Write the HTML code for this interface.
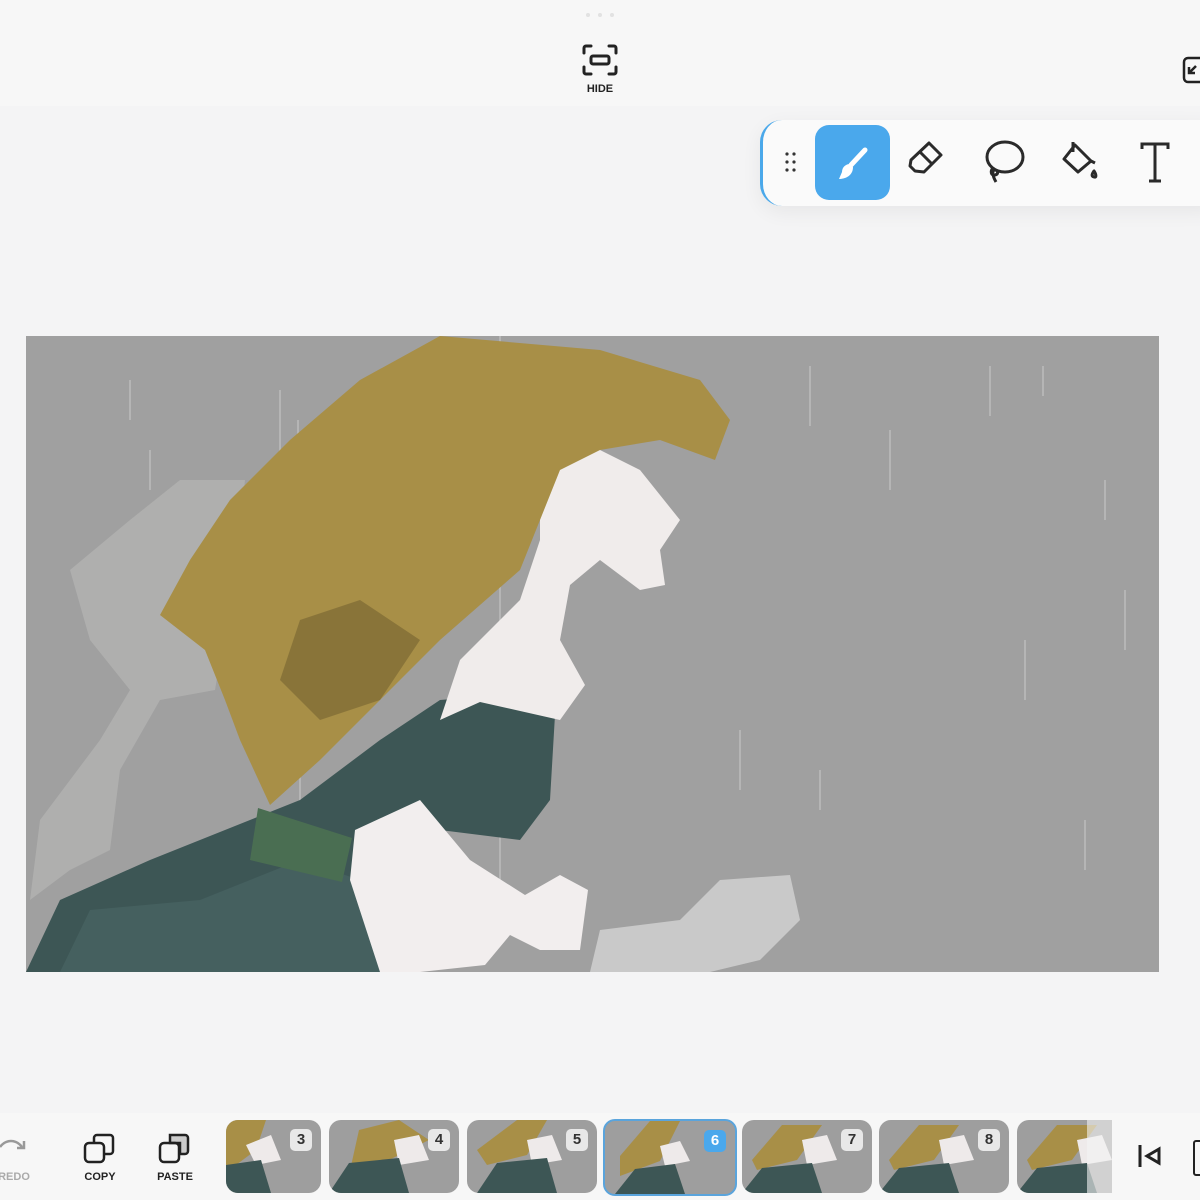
<!DOCTYPE html><html><head><style>
body{margin:0;width:1200px;height:1200px;background:#f4f4f5;font-family:"Liberation Sans",sans-serif;position:relative;overflow:hidden}
.top{position:absolute;left:0;top:0;width:1200px;height:106px;background:#f7f7f7}
.lbl{position:absolute;font-size:11px;font-weight:bold;color:#222;text-align:center}
.tb{position:absolute;left:760px;top:120px;width:460px;height:86px;background:#fafafa;border-radius:22px;border-left:3px solid #4aa8ea;box-shadow:0 6px 20px rgba(0,0,0,.06)}
.bot{position:absolute;left:0;top:1113px;width:1200px;height:87px;background:#f7f7f7}
.th{position:absolute;top:1120px;height:73px;border-radius:12px;background:#9e9e9e;overflow:hidden}
.th svg{position:absolute;left:0;top:0}
.num{position:absolute;right:9px;top:9px;width:22px;height:22px;border-radius:5px;background:#e8e8e8;font-size:15px;font-weight:bold;color:#333;text-align:center;line-height:22px}
</style></head><body>
<div class="top"></div>
<svg style="position:absolute;left:585px;top:12px" width="32" height="6"><circle cx="3" cy="3" r="2" fill="#e2e2e2"/><circle cx="15" cy="3" r="2" fill="#e2e2e2"/><circle cx="27" cy="3" r="2" fill="#e2e2e2"/></svg>
<svg style="position:absolute;left:582px;top:44px" width="36" height="32" viewBox="0 0 36 32" fill="none" stroke="#222" stroke-width="3" stroke-linecap="round"><path d="M2 9V4a2 2 0 0 1 2-2h5M27 2h5a2 2 0 0 1 2 2v5M34 23v5a2 2 0 0 1-2 2h-5M9 30H4a2 2 0 0 1-2-2v-5"/><rect x="9" y="12" width="18" height="8" rx="2"/></svg>
<div class="lbl" style="left:570px;top:83px;width:60px">HIDE</div>
<svg style="position:absolute;left:1182px;top:56px" width="20" height="30" fill="none" stroke="#222" stroke-width="2.5"><rect x="2" y="2" width="24" height="24" rx="4"/><path d="M14 10l-7 7M7 11v6h6"/></svg>
<div class="tb">
<svg style="position:absolute;left:22px;top:32px" width="12" height="22" fill="#333"><circle cx="2" cy="2" r="1.6"/><circle cx="9" cy="2" r="1.6"/><circle cx="2" cy="10" r="1.6"/><circle cx="9" cy="10" r="1.6"/><circle cx="2" cy="18" r="1.6"/><circle cx="9" cy="18" r="1.6"/></svg>
<div style="position:absolute;left:52px;top:5px;width:75px;height:75px;border-radius:14px;background:#4aa8ec"></div>
<svg style="position:absolute;left:52px;top:5px" width="75" height="75"><path d="M50 25L36 40" stroke="#fff" stroke-width="5" stroke-linecap="round"/><path d="M35 39c-4 0-8 3-8 8l-3 7c6 0 14-3 14-12z" fill="#fff"/></svg>
<svg style="position:absolute;left:140px;top:18px" width="50" height="50" fill="none" stroke="#2a2a2a" stroke-width="3" stroke-linejoin="round"><path d="M26 5l12 12-17 17-9-1-5-5 1-6z"/><path d="M17 14l12 12"/></svg>
<svg style="position:absolute;left:218px;top:18px" width="50" height="52" fill="none" stroke="#2a2a2a" stroke-width="3"><ellipse cx="24" cy="19" rx="18" ry="15"/><path d="M12 30c-3 3-2 8 2 7s3-5 0-5-3 5 1 12"/></svg>
<svg style="position:absolute;left:294px;top:18px" width="50" height="52" fill="none" stroke="#2a2a2a" stroke-width="3" stroke-linejoin="round"><path d="M18 7l16 16-13 11L7 21z"/><path d="M16 4v10M34 23l4 2"/><path d="M37 33c-2 3-3 5 0 6s2-3 0-6z"/></svg>
<svg style="position:absolute;left:372px;top:20px" width="40" height="46" fill="none" stroke="#2a2a2a" stroke-width="3"><path d="M7 9V4h26v5M20 4v37M14 41h12"/></svg>
</div>
<svg style="position:absolute;left:26px;top:336px" width="1133" height="636" viewBox="0 0 1133 636">
<rect width="1133" height="636" fill="#a0a0a0"/>
<g transform="translate(-26,-336)">
<g stroke="#c8c8c8" stroke-width="1.5" opacity=".7"><path d="M130 380v40M280 390v90M298 420v60M500 336v600M810 366v60M890 430v60M990 366v50M1043 366v30M1105 480v40M1125 590v60M1025 640v60M740 730v60M820 770v40M1085 820v50M300 500v400M150 450v40"/></g>
<path d="M70 570L130 520L180 480L245 480L235 570L215 690L160 700L120 770L110 850L70 870L30 900L40 820L100 740L130 690L90 640z" fill="#b3b3b1" opacity=".8"/>
<path d="M26 972L60 900L150 860L250 820L300 800L380 740L440 700L500 695L555 715L550 800L520 840L440 830L400 972z" fill="#3d5655"/>
<path d="M60 972L90 910L200 900L300 860L360 880L400 972z" fill="#45605f"/>
<path d="M258 808L352 838L342 882L250 860z" fill="#4a6e52"/>
<path d="M540 470L580 440L640 470L680 520L660 550L665 585L640 590L600 560L570 585L560 640L585 685L560 720L480 702L440 720L460 660L520 600L540 540z" fill="#f0eceb"/>
<path d="M440 336L600 350L700 380L730 420L715 460L660 440L600 450L560 470L540 520L520 570L440 640L380 700L320 760L270 805L240 740L225 700L205 650L160 615L190 560L230 500L290 440L360 380z" fill="#a88f47"/>
<path d="M300 620L360 600L420 640L380 700L320 720L280 680z" fill="#6f5f2e" opacity=".55"/>
<path d="M355 830L420 800L470 860L525 895L560 875L588 890L580 950L540 950L510 935L485 965L420 972L380 972L350 880z" fill="#f2eeee"/>
<path d="M600 930L680 920L720 880L790 875L800 920L760 960L710 972L590 972z" fill="#c9c9c9"/>
</g>
</svg>
<div class="bot"></div>
<svg style="position:absolute;left:0;top:1133px" width="32" height="30" fill="none" stroke="#999" stroke-width="2.5"><path d="M0 14c6-8 16-8 22 0M24 8v7h-7"/></svg>
<div class="lbl" style="left:-6px;top:1171px;width:40px;color:#aaa">REDO</div>
<svg style="position:absolute;left:83px;top:1132px" width="34" height="34" fill="none" stroke="#222" stroke-width="2.5"><rect x="2" y="11" width="19" height="19" rx="4"/><path d="M11 10V6a3 3 0 0 1 3-3h13a3 3 0 0 1 3 3v13a3 3 0 0 1-3 3h-5"/></svg>
<div class="lbl" style="left:75px;top:1171px;width:50px">COPY</div>
<svg style="position:absolute;left:158px;top:1132px" width="34" height="34" fill="none" stroke="#222" stroke-width="2.5"><path d="M12 3h15a3 3 0 0 1 3 3v13a3 3 0 0 1-3 3h-5V11H12z" fill="#ccc"/><rect x="2" y="11" width="19" height="19" rx="4"/></svg>
<div class="lbl" style="left:150px;top:1171px;width:50px">PASTE</div>
<div class="th" style="left:226px;width:95px"><svg width="95" height="73"><path d="M0 0h40l-10 30-20 15H0z" fill="#a88f47"/><path d="M20 25l25-10 10 25-25 5z" fill="#eeeaea"/><path d="M0 73V45l35 -5 10 33z" fill="#3d5655"/></svg><div class="num">3</div></div>
<div class="th" style="left:329px;width:130px"><svg width="130" height="73"><path d="M30 10l40-10 30 20-40 20-40 15z" fill="#a88f47"/><path d="M65 20l25-5 10 25-30 5z" fill="#eeeaea"/><path d="M0 73l20-30 50-5 10 35z" fill="#3d5655"/></svg><div class="num">4</div></div>
<div class="th" style="left:467px;width:130px"><svg width="130" height="73"><path d="M10 30l40-30h30l-20 35-40 10z" fill="#a88f47"/><path d="M60 20l25-5 10 25-30 5z" fill="#eeeaea"/><path d="M10 73l20-30 50-5 10 35z" fill="#3d5655"/></svg><div class="num">5</div></div>
<div class="th" style="left:603px;width:130px;border:2px solid #5aa4dc;top:1119px"><svg width="130" height="73"><path d="M15 35l30-35h30l-20 40-40 15z" fill="#a88f47"/><path d="M55 25l20-5 10 20-25 5z" fill="#eeeaea"/><path d="M10 73l20-25 40-5 10 30z" fill="#3d5655"/></svg><div class="num" style="background:#4aa8ec;color:#fff">6</div></div>
<div class="th" style="left:742px;width:130px"><svg width="130" height="73"><path d="M10 40l30-35h40l-25 35-40 10z" fill="#a88f47"/><path d="M60 20l25-5 10 25-30 5z" fill="#eeeaea"/><path d="M0 73l20-25 50-5 10 30z" fill="#3d5655"/></svg><div class="num">7</div></div>
<div class="th" style="left:879px;width:130px"><svg width="130" height="73"><path d="M10 40l30-35h40l-25 35-40 10z" fill="#a88f47"/><path d="M60 20l25-5 10 25-30 5z" fill="#eeeaea"/><path d="M0 73l20-25 50-5 10 30z" fill="#3d5655"/></svg><div class="num">8</div></div>
<div class="th" style="left:1017px;width:95px;border-radius:12px 0 0 12px"><svg width="95" height="73"><path d="M10 40l30-35h40l-25 35-40 10z" fill="#a88f47"/><path d="M60 20l25-5 10 25-30 5z" fill="#eeeaea"/><path d="M0 73l20-25 50-5 10 30z" fill="#3d5655"/><rect x="70" width="25" height="73" fill="#f4f4f4" opacity=".6"/></svg></div>
<svg style="position:absolute;left:1137px;top:1143px" width="30" height="28" fill="none" stroke="#222" stroke-width="3"><path d="M3 2v22M22 6l-12 7 12 7z"/></svg>
<div style="position:absolute;left:1193px;top:1140px;width:10px;height:32px;border:2.5px solid #222;border-radius:3px"></div>
</body></html>
